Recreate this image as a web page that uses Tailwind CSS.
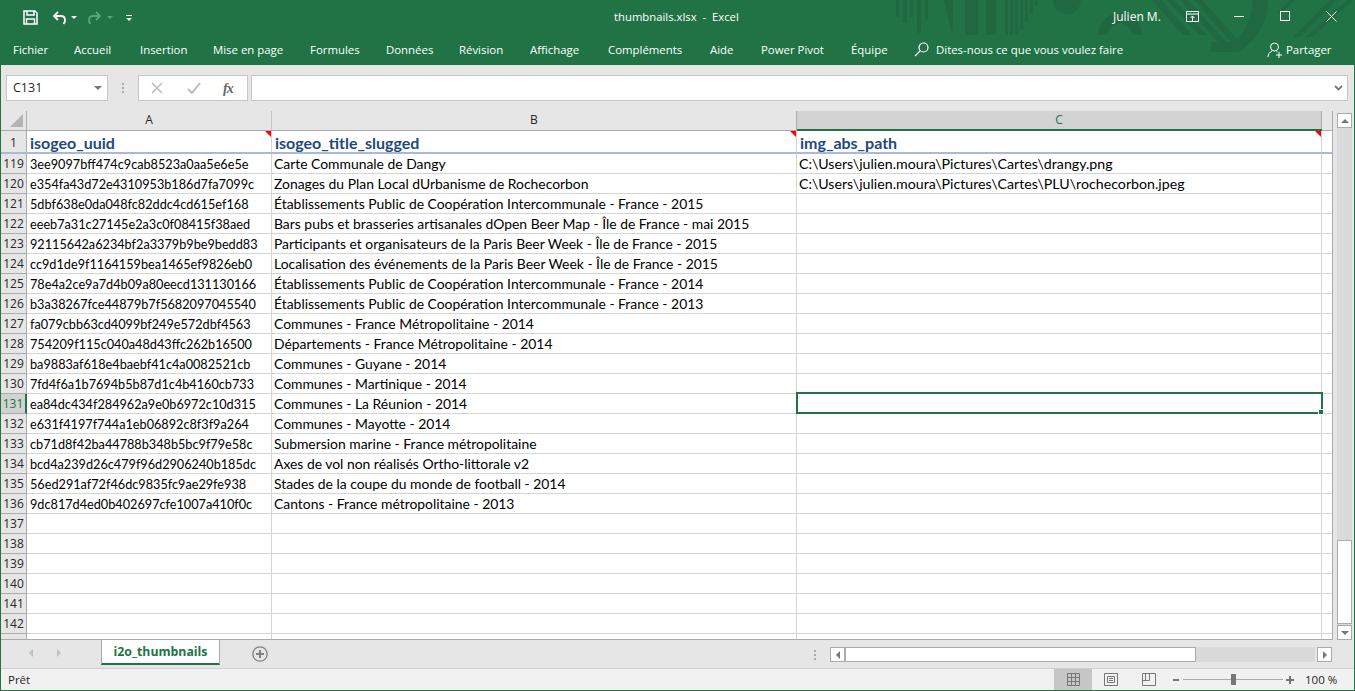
<!DOCTYPE html>
<html lang="en">
<head>
    <meta charset="UTF-8">
    <title>thumbnails.xlsx - Excel</title>
    <script src="https://cdn.jsdelivr.net/npm/@tailwindcss/browser@4"></script>
</head>
<body class="bg-[#e6e6e6] overflow-hidden">
<div class="w-[1355px] h-[691px] flex flex-col border-x border-b border-[#217346] font-['Open_Sans','Noto_Sans',sans-serif] text-[12px] text-[#262626]">

    <!-- Title bar and ribbon tabs -->
    <header class="relative h-[65px] shrink-0 bg-[#217346] text-white -mx-px overflow-hidden">
        <!-- background pattern, in header coordinates -->
        <svg class="absolute left-0 top-0" width="1355" height="65" viewBox="0 0 1355 65" fill="#1f6840">
            <path d="M896 0h3v17h-3zM903 0h4v23h-4zM910 0h3v17h-3zM917 0h4v33h-4zM925 0h3v20h-3z"/>
            <path d="M944 0h9v24l-1 9z"/>
            <path d="M965 0h13v35h-13zM986 0h10v35h-10zM1005 0h3v35h-3zM1010 0h3v35h-3zM1015 0h3v35h-3zM1020 0h3v30h-3zM1025 0h3v22h-3zM1030 0h3v14h-3zM1035 0h3v6h-3z"/>
            <path d="M1053 0h28c-1 9-7 14-14 14s-13-5-14-14z"/>
            <path d="M1098 35a22 22 0 1 1 44 0h-10a12 12 0 1 0-24 0z"/>
            <path d="M1152 0h9l31 35h-9zM1167 0h7l33 35h-8zM1180 0h8l38 42h-8zM1194 0h8l38 42h-9z"/>
            <path d="M1253 0h15c0 22-12 42-30 52h-27V42h24c10-10 17-26 18-42z"/>
            <path d="M1278 12l12-12h5l-14 14zM1293 37l37-37h7l-37 37zM1306 37l41-37h6l-41 37z"/>
        </svg>

        <div class="relative h-[35px] flex items-center">
            <!-- quick access -->
            <div class="flex items-center pl-[23px]">
                <svg width="15" height="15" viewBox="0 0 15 15" fill="none" stroke="#fff" stroke-width="1.500"><path d="M1 1h11l2 2v11H1z"/><path d="M4 1v4h7V1M3.500 14V9h8v5"/></svg>
                <svg class="ml-[14px]" width="15" height="14" viewBox="0 0 15 14" fill="none" stroke="#fff" stroke-width="1.800"><path d="M6 1L2 5l4 4"/><path d="M2 5h7c4 0 5.500 4.500 2.500 8"/></svg>
                <span class="ml-[4px] w-0 h-0 border-x-[3px] border-x-transparent border-t-[3px] border-t-white"></span>
                <svg class="ml-[10px]" width="15" height="14" viewBox="0 0 15 14" fill="none" stroke="#5da27e" stroke-width="1.800"><path d="M9 1l4 4-4 4"/><path d="M13 5H6C2 5 .500 9.500 3.500 13"/></svg>
                <span class="ml-[5px] w-0 h-0 border-x-[3px] border-x-transparent border-t-[3px] border-t-[#5da27e]"></span>
                <span class="ml-[13px] flex flex-col items-center gap-[2px]">
                    <span class="w-[6px] h-px bg-white"></span>
                    <span class="w-0 h-0 border-x-[3px] border-x-transparent border-t-[3px] border-t-white"></span>
                </span>
            </div>
            <div class="absolute left-[614px] top-[9px] text-[11.300px] whitespace-nowrap">thumbnails.xlsx&nbsp; -&nbsp; Excel</div>
            <div class="absolute left-[1113px] top-[8px] text-[12px]">Julien M.</div>
            <!-- window controls -->
            <svg class="absolute left-[1186px] top-[11px]" width="14" height="12" viewBox="0 0 14 12" fill="none" stroke="#fff"><path d="M.500.500h12v10h-12zM.500 3h12M6.500 10V5M4.500 7l2-2 2 2"/></svg>
            <div class="absolute left-[1234px] top-[16px] w-[10px] h-px bg-white"></div>
            <div class="absolute left-[1280px] top-[11px] w-[10px] h-[10px] border border-white"></div>
            <svg class="absolute left-[1326px] top-[11px]" width="11" height="11" viewBox="0 0 11 11" stroke="#fff"><path d="M.500.500l10 10M10.500.500l-10 10"/></svg>
        </div>

        <nav class="relative h-[30px] flex items-start pt-[6px] pl-[13px] whitespace-nowrap text-[11.400px] leading-[17px]">
            <span class="w-[61px]">Fichier</span>
            <span class="w-[66px]">Accueil</span>
            <span class="w-[73px]">Insertion</span>
            <span class="w-[97px]">Mise en page</span>
            <span class="w-[76px]">Formules</span>
            <span class="w-[73px]">Données</span>
            <span class="w-[71px]">Révision</span>
            <span class="w-[78px]">Affichage</span>
            <span class="w-[102px]">Compléments</span>
            <span class="w-[51px]">Aide</span>
            <span class="w-[90px]">Power Pivot</span>
            <span class="w-[63px]">Équipe</span>
            <svg class="mt-[1px]" width="15" height="15" viewBox="0 0 15 15" fill="none" stroke="#fff" stroke-width="1.200"><circle cx="9.500" cy="5.500" r="4.500"/><path d="M6 9l-5 5"/></svg>
            <span class="ml-[7px] w-[331px]">Dites-nous ce que vous voulez faire</span>
            <svg class="mt-[1px]" width="16" height="16" viewBox="0 0 16 16" fill="none" stroke="#fff"><circle cx="7.500" cy="5" r="4"/><path d="M1 15c0-3 2-5 4-6M9.500 9.500l1 .5M9 13h6M12 10v6"/></svg>
            <span class="ml-[3px]">Partager</span>
        </nav>
    </header>

    <!-- Formula bar -->
    <div class="h-[46px] shrink-0 flex items-start pt-[10px] pl-[5px] pr-[2px]">
        <div class="w-[102px] h-[26px] bg-white border border-[#c6c6c6] flex items-center justify-between pl-[6px] pr-[5px]">
            <span class="text-[12.500px]">C131</span>
            <span class="w-0 h-0 border-x-[4px] border-x-transparent border-t-[4px] border-t-[#777]"></span>
        </div>
        <div class="w-[30px] h-[26px] flex flex-col items-center justify-center gap-[2px]">
            <span class="w-[2px] h-[2px] bg-[#aaa]"></span>
            <span class="w-[2px] h-[2px] bg-[#aaa]"></span>
            <span class="w-[2px] h-[2px] bg-[#aaa]"></span>
        </div>
        <div class="w-[110px] h-[26px] bg-white border border-[#c6c6c6] flex items-center pl-[12px]">
            <svg width="12" height="12" viewBox="0 0 12 12" stroke="#bbb" stroke-width="1.500"><path d="M1 1l10 10M11 1L1 11"/></svg>
            <svg class="ml-[24px]" width="14" height="12" viewBox="0 0 14 12" fill="none" stroke="#bbb" stroke-width="2"><path d="M1 7l4 4 8-10"/></svg>
            <span class="ml-[22px] font-['Liberation_Serif',serif] italic font-bold text-[14px] tracking-[-1px] text-[#666]">fx</span>
        </div>
        <div class="w-[1097px] ml-[3px] h-[26px] bg-white border border-[#c6c6c6] flex items-center justify-end pr-[4px]">
            <svg width="9" height="6" viewBox="0 0 9 6" fill="none" stroke="#777" stroke-width="1.800"><path d="M1 1l3.500 3.500L8 1"/></svg>
        </div>
    </div>

    <!-- Sheet and vertical scrollbar -->
    <div class="h-[529px] shrink-0 flex">
        <div id="sheet" class="w-[1332px] h-[529px] bg-white border-r border-b border-[#ababab] overflow-hidden relative font-['Lato',sans-serif] text-black">

            <!-- column headers -->
            <div class="h-[19px] flex bg-[#e6e6e6] font-['Open_Sans',sans-serif] text-[12px] text-[#262626] ">
                <div class="w-[26px] relative border-r border-[#ababab]">
                    <span class="absolute right-[3px] bottom-[3px] w-0 h-0 border-l-[13px] border-l-transparent border-b-[13px] border-b-[#b4b4b4]"></span>
                </div>
                <div class="w-[245px] text-center border-r border-[#c6c6c6]">A</div>
                <div class="w-[525px] text-center border-r border-[#ababab]">B</div>
                <div class="w-[525px] text-center bg-[#d2d2d2] text-[#217346] border-r border-[#ababab]">C</div>
            </div>

            <!-- header row -->
            <div class="h-[24px] flex border-t border-[#ababab] border-b-2 border-b-[#a9b9d8] font-bold text-[16px] text-[#1f497d] leading-[23px]">
                <div class="w-[26px] shrink-0 bg-[#e6e6e6] border-r border-[#ababab] text-center font-['Open_Sans',sans-serif] font-normal text-[12px] text-[#262626]">1</div>
                <div class="relative w-[245px] shrink-0 pl-[3px] border-r border-[#d4d4d4]">isogeo_uuid<i class="absolute right-0 top-0 w-0 h-0 border-l-[6px] border-l-transparent border-t-[6px] border-t-[#ff0000]"></i></div>
                <div class="relative w-[525px] shrink-0 pl-[3px] border-r border-[#d4d4d4]">isogeo_title_slugged<i class="absolute right-0 top-0 w-0 h-0 border-l-[6px] border-l-transparent border-t-[6px] border-t-[#ff0000]"></i></div>
                <div class="relative w-[525px] shrink-0 pl-[3px] border-r border-[#d4d4d4]">img_abs_path<i class="absolute right-0 top-0 w-0 h-0 border-l-[6px] border-l-transparent border-t-[6px] border-t-[#ff0000]"></i></div>
            </div>

            <div id="rows"></div>
            <!-- green line under the C header -->
            <div class="absolute left-[796px] top-[18px] w-[525px] h-[2px] bg-[#217346]"></div>
            <!-- selected cell C131 -->
            <div class="absolute left-[795px] top-[281px] w-[527px] h-[22px] border-2 border-[#217346]">
                <i class="absolute -right-[3px] -bottom-[3px] w-[6px] h-[6px] bg-[#217346] border border-white"></i>
            </div>
        </div>

        <!-- vertical scrollbar -->
        <div class="w-[21px] pl-[4px] pt-[2px] flex flex-col">
            <div class="w-[15px] h-[527px] bg-[#dadada] flex flex-col justify-between">
                <div class="h-[15px] bg-white border border-[#ababab] flex items-center justify-center">
                    <span class="w-0 h-0 border-x-[4px] border-x-transparent border-b-[4px] border-b-[#777]"></span>
                </div>
                <div class="flex flex-col gap-[1px]">
                    <div class="h-[84px] bg-white border border-[#ababab]"></div>
                    <div class="h-[15px] bg-white border border-[#ababab] flex items-center justify-center">
                        <span class="w-0 h-0 border-x-[4px] border-x-transparent border-t-[4px] border-t-[#777]"></span>
                    </div>
                </div>
            </div>
        </div>
    </div>

    <!-- Sheet tabs and horizontal scrollbar -->
    <div class="h-[28px] shrink-0 flex items-start">
        <div class="w-[100px] h-[26px] flex items-center pl-[28px]">
            <span class="w-0 h-0 border-y-[4px] border-y-transparent border-r-[4px] border-r-[#c0c0c0]"></span>
            <span class="ml-[24px] w-0 h-0 border-y-[4px] border-y-transparent border-l-[4px] border-l-[#c0c0c0]"></span>
        </div>
        <div class="-mt-px w-[119px] h-[26px] bg-white border-x border-t-0 border-[#ababab] border-b-2 border-b-[#217346] text-center font-bold text-[12.300px] text-[#217346] leading-[26px]">i2o_thumbnails</div>
        <svg class="ml-[32px] mt-[6px]" width="16" height="16" viewBox="0 0 16 16" fill="none" stroke="#808080" stroke-width="1.300"><circle cx="8" cy="8" r="7.200"/><path stroke-width="2" d="M8 4v8M4 8h8"/></svg>
        <div class="ml-auto mt-[7px] flex items-center">
            <span class="mr-[14px] flex flex-col gap-[2px]">
                <i class="w-[2px] h-[2px] bg-[#aaa]"></i>
                <i class="w-[2px] h-[2px] bg-[#aaa]"></i>
                <i class="w-[2px] h-[2px] bg-[#aaa]"></i>
            </span>
            <div class="w-[15px] h-[15px] bg-white border border-[#ababab] flex items-center justify-center">
                <span class="w-0 h-0 border-y-[4px] border-y-transparent border-r-[4px] border-r-[#777]"></span>
            </div>
            <div class="w-[470px] h-[15px] bg-[#dadada] flex">
                <div class="w-[351px] bg-white border border-[#ababab]"></div>
            </div>
            <div class="w-[15px] h-[15px] ml-[2px] mr-[22px] bg-white border border-[#ababab] flex items-center justify-center">
                <span class="w-0 h-0 border-y-[4px] border-y-transparent border-l-[4px] border-l-[#777]"></span>
            </div>
        </div>
    </div>

    <!-- Status bar -->
    <footer class="h-[22px] shrink-0 bg-[#f1f1f1] border-t border-[#d0d0d0] flex items-center pl-[7px] text-[11.500px]">
        <span>Prêt</span>
        <div class="ml-auto h-full flex items-center">
            <div class="w-[38px] h-full bg-[#c6c6c6] flex items-center justify-center">
                <svg width="13" height="13" viewBox="0 0 13 13" fill="none" stroke="#777"><path d="M.500.500h12v12H.500zM.500 4.500h12M.500 8.500h12M4.500.500v12M8.500.500v12"/></svg>
            </div>
            <div class="w-[38px] flex justify-center">
                <svg width="14" height="13" viewBox="0 0 14 13" fill="none" stroke="#777"><path d="M.500.500h13v12H.500zM3.500 3.500h7v6h-7zM5 5.500h4M5 7.500h4"/></svg>
            </div>
            <div class="w-[38px] flex justify-center">
                <svg width="14" height="13" viewBox="0 0 14 13" fill="none" stroke="#777"><path d="M.500.500h13v12H.500zM.500 7.500h7v-7M3.500.500v7"/></svg>
            </div>
            <div class="ml-[5px] w-[6px] h-[2px] bg-[#777]"></div>
            <div class="ml-[4px] relative w-[100px] h-px bg-[#aaa]">
                <i class="absolute left-[48px] -top-[5px] w-[5px] h-[11px] bg-[#777]"></i>
            </div>
            <svg class="ml-[3px]" width="8" height="8" viewBox="0 0 8 8" stroke="#777" stroke-width="2"><path d="M4 0v8M0 4h8"/></svg>
            <span class="ml-[11px] w-[49px]">100 %</span>
        </div>
    </footer>
</div>

<script>
    const rows = [
        ['119', '3ee9097bff474c9cab8523a0aa5e6e5e', 'Carte Communale de Dangy', 'C:\\Users\\julien.moura\\Pictures\\Cartes\\drangy.png'],
        ['120', 'e354fa43d72e4310953b186d7fa7099c', 'Zonages du Plan Local dUrbanisme de Rochecorbon', 'C:\\Users\\julien.moura\\Pictures\\Cartes\\PLU\\rochecorbon.jpeg'],
        ['121', '5dbf638e0da048fc82ddc4cd615ef168', 'Établissements Public de Coopération Intercommunale - France - 2015', ''],
        ['122', 'eeeb7a31c27145e2a3c0f08415f38aed', 'Bars pubs et brasseries artisanales dOpen Beer Map - Île de France - mai 2015', ''],
        ['123', '92115642a6234bf2a3379b9be9bedd83', 'Participants et organisateurs de la Paris Beer Week - Île de France - 2015', ''],
        ['124', 'cc9d1de9f1164159bea1465ef9826eb0', 'Localisation des événements de la Paris Beer Week - Île de France - 2015', ''],
        ['125', '78e4a2ce9a7d4b09a80eecd131130166', 'Établissements Public de Coopération Intercommunale - France - 2014', ''],
        ['126', 'b3a38267fce44879b7f5682097045540', 'Établissements Public de Coopération Intercommunale - France - 2013', ''],
        ['127', 'fa079cbb63cd4099bf249e572dbf4563', 'Communes - France Métropolitaine - 2014', ''],
        ['128', '754209f115c040a48d43ffc262b16500', 'Départements - France Métropolitaine - 2014', ''],
        ['129', 'ba9883af618e4baebf41c4a0082521cb', 'Communes - Guyane - 2014', ''],
        ['130', '7fd4f6a1b7694b5b87d1c4b4160cb733', 'Communes - Martinique - 2014', ''],
        ['131', 'ea84dc434f284962a9e0b6972c10d315', 'Communes - La Réunion - 2014', ''],
        ['132', 'e631f4197f744a1eb06892c8f3f9a264', 'Communes - Mayotte - 2014', ''],
        ['133', 'cb71d8f42ba44788b348b5bc9f79e58c', 'Submersion marine - France métropolitaine', ''],
        ['134', 'bcd4a239d26c479f96d2906240b185dc', 'Axes de vol non réalisés Ortho-littorale v2', ''],
        ['135', '56ed291af72f46dc9835fc9ae29fe938', 'Stades de la coupe du monde de football - 2014', ''],
        ['136', '9dc817d4ed0b402697cfe1007a410f0c', 'Cantons - France métropolitaine - 2013', ''],
        ['137', '', '', ''], ['138', '', '', ''], ['139', '', '', ''], ['140', '', '', ''], ['141', '', '', ''], ['142', '', '', ''], ['', '', '', '']
    ];

    document.getElementById('rows').innerHTML = rows.map(r => `
        <div class="h-[20px] flex border-b border-[#d4d4d4] leading-[20px] whitespace-nowrap">
            <div class="w-[26px] shrink-0 border-r ${r[0] === '131' ? 'bg-[#d2d2d2] text-[#217346] border-r-2 border-r-[#217346]' : 'bg-[#e6e6e6] text-[#262626] border-[#ababab]'} border-b border-b-[#ababab] -mb-px text-center font-['Open_Sans',sans-serif] text-[12px] ">${r[0]}</div>
            <div class="w-[245px] shrink-0 pl-[3px] border-r border-[#d4d4d4] overflow-hidden text-[12.700px]">${r[1]}</div>
            <div class="w-[525px] shrink-0 pl-[2px] border-r border-[#d4d4d4] text-[13.900px]">${r[2]}</div>
            <div class="w-[525px] shrink-0 pl-[2px] border-r border-[#d4d4d4] text-[14.200px]">${r[3]}</div>
        </div>`).join('');
</script>
</body>
</html>
